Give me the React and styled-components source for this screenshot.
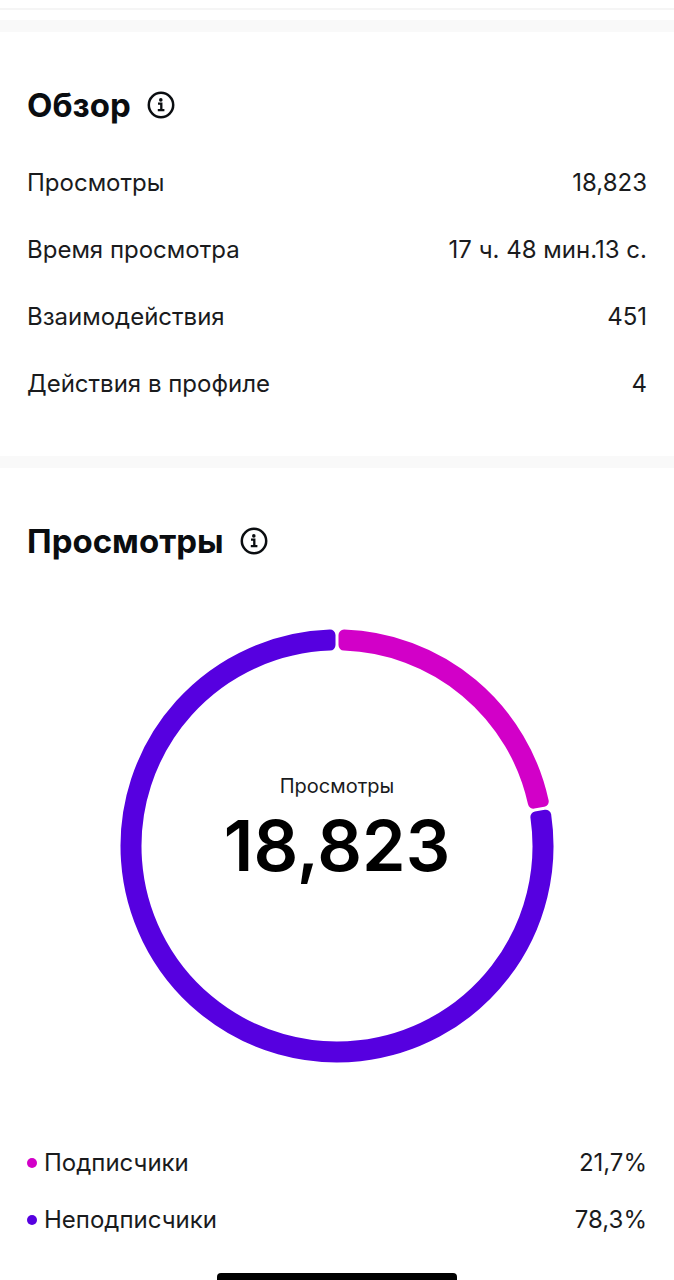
import React from 'react';
import styled, { createGlobalStyle } from 'styled-components'

const GlobalStyle = createGlobalStyle`
    body {
        margin: 0;
        background-color: #ffffff;
        color: #1a1b1d;
        font-family: Inter, "Liberation Sans", sans-serif;
    }
`;

const overview = [
    { name: 'Просмотры', value: '18,823' },
    { name: 'Время просмотра', value: '17 ч. 48 мин.13 с.' },
    { name: 'Взаимодействия', value: '451' },
    { name: 'Действия в профиле', value: '4' },
]

const audience = [
    { name: 'Подписчики', value: '21,7%', color: '#d200c8', from: 0, to: 79.7 },
    { name: 'Неподписчики', value: '78,3%', color: '#5600e0', from: 79.7, to: 360 },
]

// ring segment, inset by the corner radius so the round stroke fills it out
function segmentPath(from, to) {
    const outer = 211, inner = 201, pad = 7

    const point = (r, deg, side) => {
        const a = deg * Math.PI / 180 + side * Math.asin(pad / r)
        return (217 + r * Math.sin(a)).toFixed(2) + ' ' + (217 - r * Math.cos(a)).toFixed(2)
    }
    const large = to - from > 180 ? 1 : 0

    return `M${point(outer, from, 1)} A${outer} ${outer} 0 ${large} 1 ${point(outer, to, -1)}
        L${point(inner, to, -1)} A${inner} ${inner} 0 ${large} 0 ${point(inner, from, 1)} Z`
}

function Info() {
    return (
        <InfoButton type="button" aria-label="Информация">
            <svg width="28" height="28" viewBox="0 0 28 28" fill="none" stroke="currentColor">
                <circle cx="14" cy="14" r="12.2" strokeWidth="2.5" />
                <circle cx="13.8" cy="8.9" r="1.8" fill="currentColor" stroke="none" />
                <path d="M11 12.7H14.3V19.2M10.8 19.2H17.4" strokeWidth="2.3" />
            </svg>
        </InfoButton>
    )
}

function Donut() {
    return (
        <Chart>
            <Ring viewBox="0 0 434 434" aria-hidden="true">
                {audience.map((item) => (
                    <path
                        key={item.name}
                        d={segmentPath(item.from, item.to)}
                        fill={item.color}
                        stroke={item.color}
                        strokeWidth="11"
                        strokeLinejoin="round"
                    />
                ))}
            </Ring>
            <ChartText>
                <ChartLabel>Просмотры</ChartLabel>
                <Total>18,823</Total>
            </ChartText>
        </Chart>
    )
}

function App() {
    return (
        <main>
            <GlobalStyle />
            <TopLine />
            <Divider />
            <Section>
                <TitleRow>
                    <Title>Обзор</Title>
                    <Info />
                </TitleRow>
                <List>
                    {overview.map((item) => (
                        <Row key={item.name} $height={67}>
                            <dt>{item.name}</dt>
                            <Value>{item.value}</Value>
                        </Row>
                    ))}
                </List>
            </Section>
            <Divider />
            <Section>
                <TitleRow>
                    <Title>Просмотры</Title>
                    <Info />
                </TitleRow>
                <Donut />
                <List>
                    {audience.map((item) => (
                        <Row key={item.name} $height={57}>
                            <Legend $color={item.color}>{item.name}</Legend>
                            <Value>{item.value}</Value>
                        </Row>
                    ))}
                </List>
            </Section>
            <HomeBar />
        </main>
    )
}

export default App

const TopLine = styled.div`
    height: 11px;
    padding-top: 8px;
    &::before {
        content: '';
        display: block;
        height: 2px;
        background-color: #f5f5f5;
    }
    margin-bottom: 1px;
`;

const Divider = styled.div`
    height: 12px;
    background-color: #f9f9f9;
`;

const Section = styled.section`
    padding: 53px 27px 39px;
    &:last-of-type {
        padding-bottom: 25px;
    }
`;

const TitleRow = styled.div`
    display: flex;
    align-items: center;
    gap: 16px;
    margin-bottom: 24px;
`;

const Title = styled.h2`
    margin: 0;
    font-size: 33px;
    line-height: 40px;
    font-weight: 700;
    color: #0a0d10;
`;

const InfoButton = styled.button`
    display: flex;
    padding: 0;
    border: none;
    background: none;
    color: #0a0d10;
    cursor: pointer;
`;

const List = styled.dl`
    margin: 0;
`;

const Row = styled.div`
    display: flex;
    align-items: center;
    justify-content: space-between;
    height: ${(props) => props.$height}px;
    font-size: 24px;
    line-height: 32px;
`;

const Value = styled.dd`
    margin: 0;
    text-align: right;
`;

const Legend = styled.dt`
    display: flex;
    align-items: center;
    gap: 7px;
    &::before {
        content: '';
        width: 10px;
        height: 10px;
        border-radius: 50%;
        background-color: ${(props) => props.$color};
    }
`;

const Chart = styled.div`
    display: grid;
    place-items: center;
    max-width: 434px;
    margin: 68px auto 71px;
`;

const Ring = styled.svg`
    grid-area: 1 / 1;
    display: block;
    width: 100%;
`;

const ChartText = styled.div`
    grid-area: 1 / 1;
    padding-bottom: 28px;
    text-align: center;
`;

const ChartLabel = styled.div`
    font-size: 20px;
    line-height: 28px;
`;

const Total = styled.div`
    font-size: 70px;
    line-height: 92px;
    font-weight: 600;
    color: #000000;
`;

const HomeBar = styled.div`
    width: 240px;
    height: 7px;
    margin: 0 auto;
    border-radius: 4px 4px 0 0;
    background-color: #000000;
`;
